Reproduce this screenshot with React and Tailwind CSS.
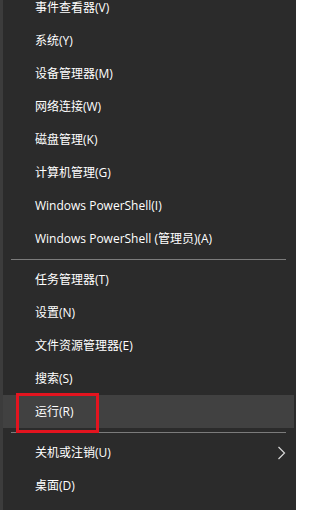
import React from "react";

const groups = [
  [
    "事件查看器(V)",
    "系统(Y)",
    "设备管理器(M)",
    "网络连接(W)",
    "磁盘管理(K)",
    "计算机管理(G)",
    "Windows PowerShell(I)",
    "Windows PowerShell (管理员)(A)",
  ],
  ["任务管理器(T)", "设置(N)", "文件资源管理器(E)", "搜索(S)", "运行(R)"],
  ["关机或注销(U)", "桌面(D)"],
];

function Row({ label, active, arrow }) {
  return (
    <div
      className={
        "relative flex h-[33px] items-center pl-[32px] pr-[8px] " +
        (active ? "bg-[#414141]" : "")
      }
    >
      <span className="whitespace-nowrap">{label}</span>
      {arrow && (
        <svg
          className="absolute right-[8px] top-[10px]"
          width="9"
          height="14"
          viewBox="0 0 9 14"
          fill="none"
        >
          <path d="M1.5 1 L7.5 7 L1.5 13" stroke="#d8d8d8" strokeWidth="1.2" />
        </svg>
      )}
    </div>
  );
}

export default function App() {
  return (
    <div
      className="relative h-[510px] w-[296px] overflow-hidden bg-[#2b2b2b] text-[12px] text-white"
      style={{ fontFamily: '"Open Sans", "Noto Sans CJK SC", sans-serif' }}
    >
      <div className="flex h-full">
        <div className="w-[3px] shrink-0 bg-[#3c3c3c]" />
        <div className="flex w-[291px] flex-col pt-0 -mt-[9px]">
          {groups.map((g, gi) => (
            <React.Fragment key={gi}>
              {gi > 0 && (
                <div className="flex h-[8px] items-center px-[8px]">
                  <div className="h-px w-full bg-[#7b7b7b]" />
                </div>
              )}
              {g.map((label) => (
                <Row
                  key={label}
                  label={label}
                  active={label === "运行(R)"}
                  arrow={label === "关机或注销(U)"}
                />
              ))}
            </React.Fragment>
          ))}
        </div>
      </div>
      <div className="pointer-events-none absolute left-[16px] top-[393px] h-[40px] w-[83px] border-[3px] border-[#e3141f]" />
    </div>
  );
}
